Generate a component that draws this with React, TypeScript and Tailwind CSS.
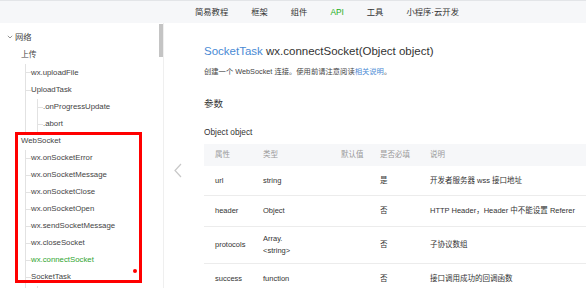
import React from "react";

const FONT = "font-['Liberation_Sans','Noto_Sans_CJK_SC',sans-serif]";

const navItems = [
  { label: "简易教程" },
  { label: "框架" },
  { label: "组件" },
  { label: "API", active: true },
  { label: "工具" },
  { label: "小程序·云开发" },
];

const socketItems = [
  "wx.onSocketError",
  "wx.onSocketMessage",
  "wx.onSocketClose",
  "wx.onSocketOpen",
  "wx.sendSocketMessage",
  "wx.closeSocket",
  "wx.connectSocket",
  "SocketTask",
];

const rows = [
  { name: "url", type: ["string"], req: "是", desc: "开发者服务器 wss 接口地址", h: "h-[30px]" },
  { name: "header", type: ["Object"], req: "否", desc: "HTTP Header，Header 中不能设置 Referer", h: "h-[31px]" },
  { name: "protocols", type: ["Array.", "<string>"], req: "否", desc: "子协议数组", h: "h-[37px]" },
  { name: "success", type: ["function"], req: "否", desc: "接口调用成功的回调函数", h: "h-[30px]" },
];

function TreeRow({ children, className = "" }: { children: React.ReactNode; className?: string }) {
  return <div className={`flex h-[17px] items-center ${className}`}>{children}</div>;
}

function ChildRow({ label, active }: { label: string; active?: boolean }) {
  return (
    <TreeRow>
      <span className="h-px w-[5px] bg-[#e2e2e2]" />
      <span className={active ? "text-[#2fa52f]" : "text-[#444]"}>{label}</span>
    </TreeRow>
  );
}

export default function App() {
  return (
    <div className={`flex h-[288px] w-[586px] flex-col overflow-hidden bg-white ${FONT}`}>
      {/* Top nav */}
      <div className="flex h-[23px] shrink-0 items-center gap-[23px] border-t border-[#e3e5e8] bg-[#f6f7f9] pl-[195px] text-[8.3px] text-[#333]">
        {navItems.map((item) => (
          <span key={item.label} className={item.active ? "text-[#1aad19]" : ""}>
            {item.label}
          </span>
        ))}
      </div>

      <div className="flex min-h-0 flex-1">
        {/* Sidebar */}
        <div className="relative flex w-[164px] shrink-0 border-r border-[#efefef]">
          <div className="flex-1 pt-[5.5px] text-[7.8px] text-[#444]">
            <TreeRow className="pl-[7px]">
              <svg width="6" height="4" viewBox="0 0 6 4" className="mr-[2px]">
                <path d="M0.8 0.8L3 3L5.2 0.8" fill="none" stroke="#888" strokeWidth="0.9" />
              </svg>
              <span className="text-[8.3px]">网络</span>
            </TreeRow>
            <TreeRow className="h-[18px] pl-[21px]">上传</TreeRow>
            <div className="ml-[25px] border-l border-[#e2e2e2]">
              <TreeRow className="h-[18px]">
                <span className="h-px w-[5px] bg-[#e2e2e2]" />
                <span>wx.uploadFile</span>
              </TreeRow>
              <ChildRow label="UploadTask" />
              <div className="ml-[11px] border-l border-[#e2e2e2]">
                <ChildRow label=".onProgressUpdate" />
                <ChildRow label=".abort" />
              </div>
            </div>
            <TreeRow className="pl-[21px]">WebSocket</TreeRow>
            <div className="ml-[25px] border-l border-[#e2e2e2]">
              {socketItems.map((s) => (
                <ChildRow key={s} label={s} active={s === "wx.connectSocket"} />
              ))}
              <div className="ml-[11px] h-[20px] border-l border-[#e2e2e2]" />
            </div>
          </div>
          {/* scrollbar */}
          <div className="w-[4px] pt-[1px]">
            <div className="h-[33px] w-[4px] bg-[#c4c4c4]" />
          </div>

          {/* red annotation box */}
          <div className="absolute left-[15px] top-[109px] h-[151px] w-[127px] border-[3px] border-[#ff0000]" />
          <div className="absolute left-[133px] top-[246px] h-[4px] w-[4px] rounded-full bg-[#ff0000]" />
        </div>

        {/* Prev arrow */}
        <div className="w-[40px] shrink-0 pl-[9px] pt-[140px]">
          <svg width="10" height="15" viewBox="0 0 10 15">
            <path d="M8 1L2 7.5L8 14" fill="none" stroke="#c8c8c8" strokeWidth="1.2" />
          </svg>
        </div>

        {/* Content */}
        <div className="min-w-0 flex-1 pt-[20px] text-[#333]">
          <div className="whitespace-nowrap text-[11.5px] leading-[16px]">
            <span className="text-[#4a8ad4]">SocketTask</span> wx.connectSocket(Object object)
          </div>
          <div className="mt-[7px] whitespace-nowrap text-[7.3px] leading-[11px] text-[#444]">
            创建一个 WebSocket 连接。使用前请注意阅读<span className="text-[#4a8ad4]">相关说明</span>。
          </div>
          <div className="mt-[20px] text-[9.5px] leading-[14px]">参数</div>
          <div className="mt-[15px] text-[8.3px] leading-[12px]">Object object</div>

          <div className="mt-[6px] whitespace-nowrap text-[7.5px]">
            <div className="flex h-[22px] items-center bg-[#f6f7f9] text-[#9a9a9a]">
              <span className="w-[59px] pl-[11px]">属性</span>
              <span className="w-[78px]">类型</span>
              <span className="w-[39px]">默认值</span>
              <span className="w-[50px]">是否必填</span>
              <span>说明</span>
            </div>
            {rows.map((r, i) => (
              <div
                key={r.name}
                className={`flex items-center ${r.h} ${i < rows.length - 1 ? "border-b border-[#ececec]" : ""}`}
              >
                <span className="w-[59px] pl-[11px]">{r.name}</span>
                <span className="w-[78px] leading-[12px]">
                  {r.type.map((t) => (
                    <div key={t}>{t}</div>
                  ))}
                </span>
                <span className="w-[39px]" />
                <span className="w-[50px]">{r.req}</span>
                <span>{r.desc}</span>
              </div>
            ))}
          </div>
        </div>
      </div>
    </div>
  );
}
